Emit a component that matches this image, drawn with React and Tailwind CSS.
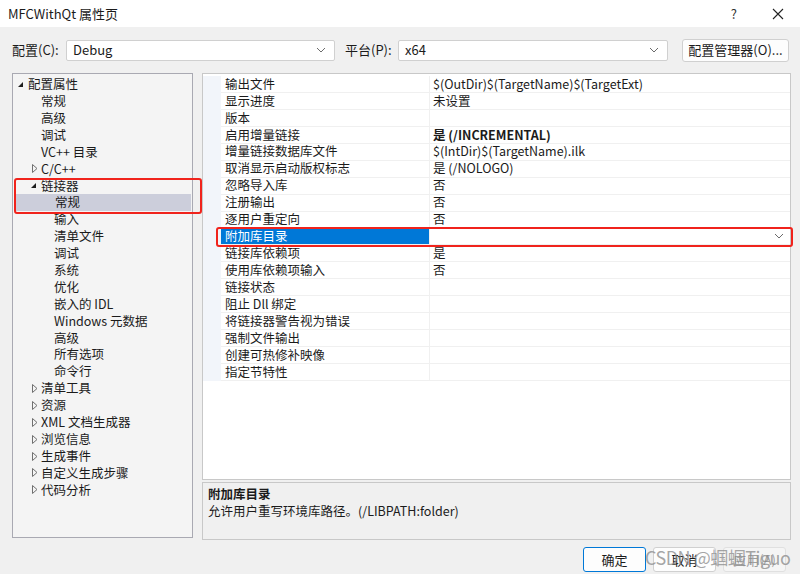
import React from 'react';

const FONT = { fontFamily: '"Segoe UI", "Noto Sans CJK SC", "Noto Sans", sans-serif' };

const tree = [
  { label: '配置属性', level: 0, arrow: 'open' },
  { label: '常规', level: 1 },
  { label: '高级', level: 1 },
  { label: '调试', level: 1 },
  { label: 'VC++ 目录', level: 1 },
  { label: 'C/C++', level: 1, arrow: 'closed' },
  { label: '链接器', level: 1, arrow: 'open' },
  { label: '常规', level: 2, selected: true },
  { label: '输入', level: 2 },
  { label: '清单文件', level: 2 },
  { label: '调试', level: 2 },
  { label: '系统', level: 2 },
  { label: '优化', level: 2 },
  { label: '嵌入的 IDL', level: 2 },
  { label: 'Windows 元数据', level: 2 },
  { label: '高级', level: 2 },
  { label: '所有选项', level: 2 },
  { label: '命令行', level: 2 },
  { label: '清单工具', level: 1, arrow: 'closed' },
  { label: '资源', level: 1, arrow: 'closed' },
  { label: 'XML 文档生成器', level: 1, arrow: 'closed' },
  { label: '浏览信息', level: 1, arrow: 'closed' },
  { label: '生成事件', level: 1, arrow: 'closed' },
  { label: '自定义生成步骤', level: 1, arrow: 'closed' },
  { label: '代码分析', level: 1, arrow: 'closed' },
];

// name, value, bold, selected
const props = [
  ['输出文件', '$(OutDir)$(TargetName)$(TargetExt)'],
  ['显示进度', '未设置'],
  ['版本', ''],
  ['启用增量链接', '是 (/INCREMENTAL)', true],
  ['增量链接数据库文件', '$(IntDir)$(TargetName).ilk'],
  ['取消显示启动版权标志', '是 (/NOLOGO)'],
  ['忽略导入库', '否'],
  ['注册输出', '否'],
  ['逐用户重定向', '否'],
  ['附加库目录', '', false, true],
  ['链接库依赖项', '是'],
  ['使用库依赖项输入', '否'],
  ['链接状态', ''],
  ['阻止 Dll 绑定', ''],
  ['将链接器警告视为错误', ''],
  ['强制文件输出', ''],
  ['创建可热修补映像', ''],
  ['指定节特性', ''],
];

const Chevron = ({ className }) => (
  <svg width="10" height="6" viewBox="0 0 10 6" className={className}>
    <path d="M1 1 L5 5 L9 1" fill="none" stroke="#6b6b6b" strokeWidth="1" />
  </svg>
);

const Arrow = ({ type }) =>
  type === 'open' ? (
    <svg width="7" height="7" viewBox="0 0 7 7">
      <path d="M6 1 L6 6 L1 6 Z" fill="#1e1e1e" />
    </svg>
  ) : (
    <svg width="6" height="9" viewBox="0 0 6 9">
      <path d="M0.5 0.5 L5 4.5 L0.5 8.5 Z" fill="none" stroke="#707070" strokeWidth="1" />
    </svg>
  );

function Combo({ value, width }) {
  return (
    <div className={`h-[21px] ${width} bg-white border border-[#d0d0d0] rounded-[2px] flex items-center pl-[6px] pr-[8px]`}>
      <span className="flex-1 text-[13px] text-[#1b1b1b]">{value}</span>
      <Chevron />
    </div>
  );
}

export default function App() {
  const indent = ['pl-[15px]', 'pl-[28px]', 'pl-[41px]'];
  return (
    <div className="w-[800px] h-[574px] bg-[#f0f0f0] flex flex-col relative overflow-hidden text-[#1b1b1b]" style={FONT}>
      {/* title bar */}
      <div className="h-[27px] bg-white flex items-center pl-[8px]">
        <span className="flex-1 text-[13px]">MFCWithQt 属性页</span>
        <span className="text-[13px] text-[#333] mr-[35px]">?</span>
        <svg width="12" height="12" viewBox="0 0 12 12" className="mr-[16px]">
          <path d="M1 1 L11 11 M11 1 L1 11" stroke="#222" strokeWidth="1.1" />
        </svg>
      </div>

      {/* config row */}
      <div className="flex items-center h-[24px] mt-[11px] pl-[12px]">
        <span className="text-[13px] w-[54px]">配置(C):</span>
        <Combo value="Debug" width="w-[269px]" />
        <span className="text-[13px] ml-[10px] w-[53px]">平台(P):</span>
        <Combo value="x64" width="w-[270px]" />
        <div className="ml-[14px] w-[107px] h-[23px] bg-[#fdfdfd] border border-[#d0d0d0] rounded-[3px] flex items-center justify-center text-[13px]">
          配置管理器(O)...
        </div>
      </div>

      {/* main */}
      <div className="flex mt-[11px] pl-[12px] h-[467px]">
        {/* tree */}
        <div className="w-[181px] h-[465px] bg-[#f4f4f4] border border-[#a9a9b2] pt-[2px] relative">
          {tree.map((t, i) => (
            <div
              key={i}
              className={`h-[16.9px] flex items-center text-[12.5px] leading-none ${indent[t.level]} ${t.selected ? 'bg-[#cccedb] mx-[1px]' : ''}`}
            >
              {t.arrow && (
                <span className={`w-[12px] -ml-[12px] flex items-center ${t.arrow === 'open' ? 'pl-[1px]' : 'pl-[3px]'}`}>
                  <Arrow type={t.arrow} />
                </span>
              )}
              <span>{t.label}</span>
            </div>
          ))}
          <div className="absolute left-[1px] top-[104px] w-[188px] h-[36px] border-2 border-[#f0231c] rounded-[3px]" />
        </div>

        {/* right */}
        <div className="ml-[9px] w-[589px] flex flex-col">
          <div className="h-[407px] bg-white border border-[#c8c8c8] pt-[2px] relative">
            {props.map(([name, value, bold, sel], i) => (
              <div key={i} className="h-[16.95px] flex text-[12.5px] leading-none">
                <div className="w-[18px] bg-[#f2f5fa]" />
                <div className={`w-[208px] flex items-center pl-[4px] border-b border-[#f0f0f0] ${sel ? 'bg-[#0078d7] text-white border-[#0078d7]' : ''}`}>
                  {name}
                </div>
                <div className={`flex-1 flex items-center pl-[3px] border-b border-l border-[#f0f0f0] ${bold ? 'font-bold' : ''}`}>
                  <span className="flex-1">{value}</span>
                  {sel && <Chevron className="mr-[6px]" />}
                </div>
              </div>
            ))}
            <div className="absolute left-[13px] top-[153px] w-[577px] h-[20px] border-2 border-[#f0231c] rounded-[3px]" />
          </div>
          <div className="mt-[2px] h-[58px] bg-[#f0f0f0] border border-[#c8c8c8] pl-[5px] pt-[2px] text-[12.5px] leading-[17px]">
            <div className="font-bold">附加库目录</div>
            <div>允许用户重写环境库路径。(/LIBPATH:folder)</div>
          </div>
        </div>
      </div>

      {/* buttons */}
      <div className="flex justify-end pr-[14px] mt-[7px] gap-[7px]">
        <div className="w-[63px] h-[25px] bg-[#fdfdfd] border border-[#0078d7] rounded-[3px] flex items-center justify-center text-[13px]">确定</div>
        <div className="w-[63px] h-[25px] bg-[#fdfdfd] border border-[#d0d0d0] rounded-[3px] flex items-center justify-center text-[13px]">取消</div>
        <div className="w-[63px] h-[25px] bg-[#f5f5f5] border border-[#e0e0e0] rounded-[3px] flex items-center justify-center text-[13px] text-[#a0a0a0]">应用(A)</div>
      </div>

      {/* watermark */}
      <div className="absolute left-[645px] top-[544px] text-[18px] text-[#8a8a8a]/75 pointer-events-none tracking-[-0.5px]">
        CSDN @蝈蝈Tiguo
      </div>
    </div>
  );
}
